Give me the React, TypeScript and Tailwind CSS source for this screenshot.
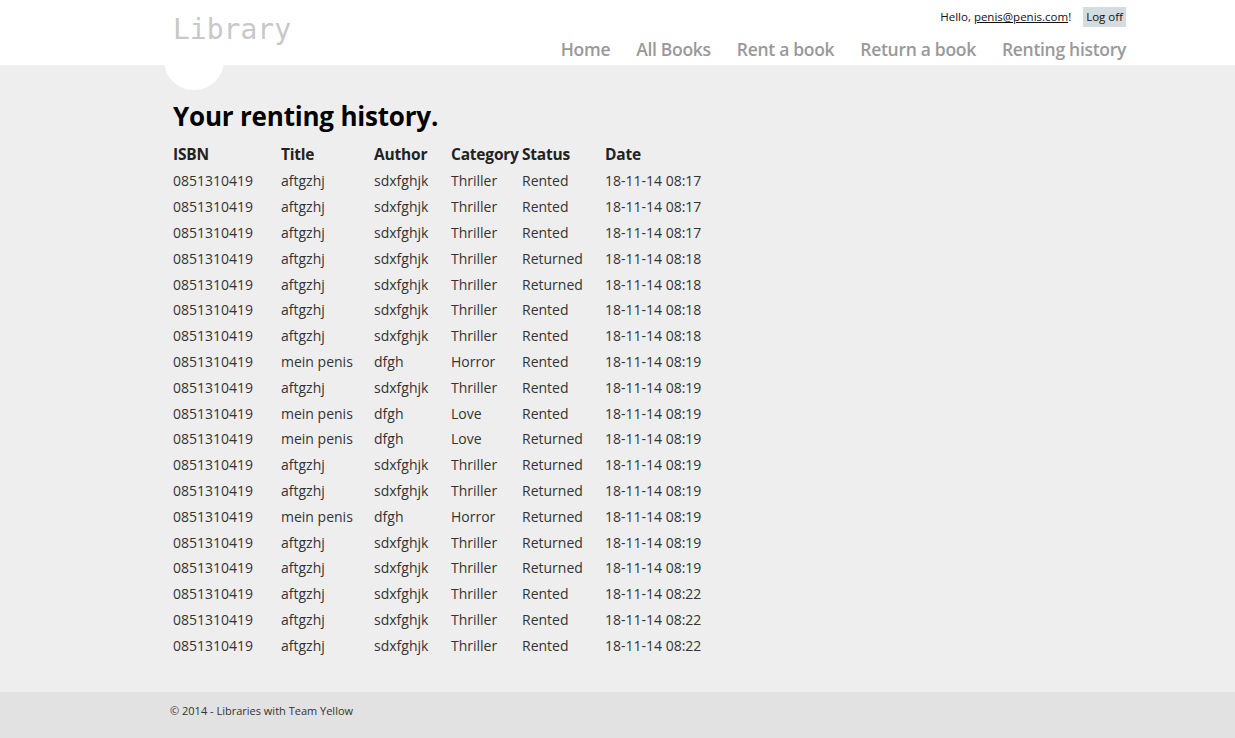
const rows: [string, string, string, string, string, string][] = [
  ['0851310419', 'aftgzhj', 'sdxfghjk', 'Thriller', 'Rented', '18-11-14 08:17'],
  ['0851310419', 'aftgzhj', 'sdxfghjk', 'Thriller', 'Rented', '18-11-14 08:17'],
  ['0851310419', 'aftgzhj', 'sdxfghjk', 'Thriller', 'Rented', '18-11-14 08:17'],
  ['0851310419', 'aftgzhj', 'sdxfghjk', 'Thriller', 'Returned', '18-11-14 08:18'],
  ['0851310419', 'aftgzhj', 'sdxfghjk', 'Thriller', 'Returned', '18-11-14 08:18'],
  ['0851310419', 'aftgzhj', 'sdxfghjk', 'Thriller', 'Rented', '18-11-14 08:18'],
  ['0851310419', 'aftgzhj', 'sdxfghjk', 'Thriller', 'Rented', '18-11-14 08:18'],
  ['0851310419', 'mein penis', 'dfgh', 'Horror', 'Rented', '18-11-14 08:19'],
  ['0851310419', 'aftgzhj', 'sdxfghjk', 'Thriller', 'Rented', '18-11-14 08:19'],
  ['0851310419', 'mein penis', 'dfgh', 'Love', 'Rented', '18-11-14 08:19'],
  ['0851310419', 'mein penis', 'dfgh', 'Love', 'Returned', '18-11-14 08:19'],
  ['0851310419', 'aftgzhj', 'sdxfghjk', 'Thriller', 'Returned', '18-11-14 08:19'],
  ['0851310419', 'aftgzhj', 'sdxfghjk', 'Thriller', 'Returned', '18-11-14 08:19'],
  ['0851310419', 'mein penis', 'dfgh', 'Horror', 'Returned', '18-11-14 08:19'],
  ['0851310419', 'aftgzhj', 'sdxfghjk', 'Thriller', 'Returned', '18-11-14 08:19'],
  ['0851310419', 'aftgzhj', 'sdxfghjk', 'Thriller', 'Returned', '18-11-14 08:19'],
  ['0851310419', 'aftgzhj', 'sdxfghjk', 'Thriller', 'Rented', '18-11-14 08:22'],
  ['0851310419', 'aftgzhj', 'sdxfghjk', 'Thriller', 'Rented', '18-11-14 08:22'],
  ['0851310419', 'aftgzhj', 'sdxfghjk', 'Thriller', 'Rented', '18-11-14 08:22'],
]

const headers = ['ISBN', 'Title', 'Author', 'Category', 'Status', 'Date']
const nav = ['Home', 'All Books', 'Rent a book', 'Return a book', 'Renting history']

export default function App() {
  return (
    <div className="min-h-screen flex flex-col bg-[#efeeef] text-[#333] font-['Open_Sans',sans-serif]">
      {/* Header */}
      <header className="bg-white h-[65px] relative">
        <div className="w-[958px] ml-[168px] relative h-full flex justify-between">
          {/* round placeholder hanging under the logo */}
          <div className="absolute left-[-4px] top-[31px] w-[60px] h-[59px] rounded-full bg-white" />
          <div className="relative pl-[5px] pt-[12px] font-['DejaVu_Sans_Mono',monospace] text-[28px] leading-[36px] text-[#c8c8c8]">
            Library
          </div>
          <div className="flex flex-col items-end">
            <div className="flex items-center mt-[7px] text-[11.5px] h-[20px]">
              <span className="text-[#111]">
                Hello, <a className="underline">penis@penis.com</a>!
              </span>
              <span className="ml-[12px] bg-[#d3dce0] text-[#111] h-[20px] px-[3px] flex items-center">Log off</span>
            </div>
            <nav className="flex gap-[26px] mt-[9px] text-[17.5px] font-semibold text-[#999] leading-[26px] tracking-[-0.3px]">
              {nav.map((n) => (
                <span key={n}>{n}</span>
              ))}
            </nav>
          </div>
        </div>
      </header>

      {/* Main */}
      <main className="flex-1 pb-[34px]">
        <div className="w-[958px] ml-[173px]">
          <h1 className="mt-[33px] text-[26px] leading-[36px] font-bold text-black tracking-[-0.2px]">
            Your renting history.
          </h1>
          <div className="mt-[7px] text-[14px]">
            <div className="grid grid-cols-[108px_93px_77px_71px_83px_auto] h-[27px] items-center font-bold text-[15.5px] tracking-[-0.2px] text-[#222]">
              {headers.map((h) => (
                <span key={h}>{h}</span>
              ))}
            </div>
            {rows.map((r, i) => (
              <div
                key={i}
                className="grid grid-cols-[108px_93px_77px_71px_83px_auto] h-[25.8px] items-center"
              >
                {r.map((c, j) => (
                  <span key={j}>{c}</span>
                ))}
              </div>
            ))}
          </div>
        </div>
      </main>

      {/* Footer */}
      <footer className="bg-[#e2e2e2] h-[46px] pt-[11px]">
        <p className="ml-[170px] text-[11px] text-[#333]">© 2014 - Libraries with Team Yellow</p>
      </footer>
    </div>
  )
}
